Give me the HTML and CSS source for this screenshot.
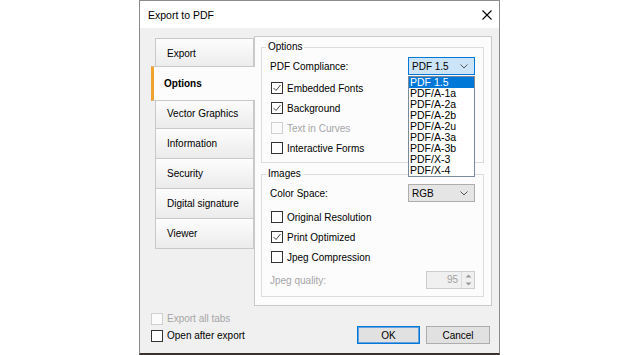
FILE: index.html
```html
<!DOCTYPE html>
<html lang="en">

<head>
    <meta charset="UTF-8">
    <title>Export to PDF</title>
    <link rel="stylesheet" href="styles.css">
</head>

<body>
    <div class="dialog">
        <div class="titlebar">
            <span class="title">Export to PDF</span>
            <svg class="close" width="10" height="10" viewBox="0 0 10 10">
                <path d="M0.5 0.5 L9.5 9.5 M9.5 0.5 L0.5 9.5" stroke="#000" stroke-width="1.1" fill="none" />
            </svg>
        </div>

        <div class="content">
            <div class="main">
                <ul class="tabs">
                    <li class="tab">Export</li>
                    <li class="tab active">Options</li>
                    <li class="tab">Vector Graphics</li>
                    <li class="tab">Information</li>
                    <li class="tab">Security</li>
                    <li class="tab">Digital signature</li>
                    <li class="tab">Viewer</li>
                </ul>

                <div class="page">
                    <fieldset class="group group-options">
                        <legend>Options</legend>
                        <div class="field">
                            <span>PDF Compliance:</span>
                            <div class="select open">
                                <span>PDF 1.5</span>
                                <svg width="8" height="5" viewBox="0 0 8 5">
                                    <path d="M0.5 0.5 L4 4 L7.5 0.5" stroke="#555" fill="none" />
                                </svg>
                                <ul class="select-list">
                                    <li class="hl">PDF 1.5</li>
                                    <li>PDF/A-1a</li>
                                    <li>PDF/A-2a</li>
                                    <li>PDF/A-2b</li>
                                    <li>PDF/A-2u</li>
                                    <li>PDF/A-3a</li>
                                    <li>PDF/A-3b</li>
                                    <li>PDF/X-3</li>
                                    <li>PDF/X-4</li>
                                </ul>
                            </div>
                        </div>
                        <div class="checks">
                            <div class="check"><span class="box checked"><svg width="10" height="10" viewBox="0 0 10 10"><path d="M1.5 5 L4 7.5 L8.5 2" stroke="#333" stroke-width="0.9" fill="none" /></svg></span>Embedded Fonts</div>
                            <div class="check"><span class="box checked"><svg width="10" height="10" viewBox="0 0 10 10"><path d="M1.5 5 L4 7.5 L8.5 2" stroke="#333" stroke-width="0.9" fill="none" /></svg></span>Background</div>
                            <div class="check disabled"><span class="box"></span>Text in Curves</div>
                            <div class="check"><span class="box"></span>Interactive Forms</div>
                        </div>
                    </fieldset>

                    <fieldset class="group group-images">
                        <legend>Images</legend>
                        <div class="field">
                            <span>Color Space:</span>
                            <div class="select">
                                <span>RGB</span>
                                <svg width="8" height="5" viewBox="0 0 8 5">
                                    <path d="M0.5 0.5 L4 4 L7.5 0.5" stroke="#555" fill="none" />
                                </svg>
                            </div>
                        </div>
                        <div class="checks">
                            <div class="check"><span class="box"></span>Original Resolution</div>
                            <div class="check"><span class="box checked"><svg width="10" height="10" viewBox="0 0 10 10"><path d="M1.5 5 L4 7.5 L8.5 2" stroke="#333" stroke-width="0.9" fill="none" /></svg></span>Print Optimized</div>
                            <div class="check"><span class="box"></span>Jpeg Compression</div>
                        </div>
                        <div class="field field-quality">
                            <span class="muted">Jpeg quality:</span>
                            <div class="spin">
                                <span class="spin-value">95</span>
                                <span class="spin-arrows">
                                    <svg width="7" height="4" viewBox="0 0 7 4"><path d="M0.5 3.5 L3.5 0.5 L6.5 3.5 Z" fill="#9a9a9a" /></svg>
                                    <svg width="7" height="4" viewBox="0 0 7 4"><path d="M0.5 0.5 L3.5 3.5 L6.5 0.5 Z" fill="#9a9a9a" /></svg>
                                </span>
                            </div>
                        </div>
                    </fieldset>
                </div>
            </div>

            <div class="footer">
                <div class="footer-checks">
                    <div class="check disabled"><span class="box"></span>Export all tabs</div>
                    <div class="check"><span class="box"></span>Open after export</div>
                </div>
                <div class="buttons">
                    <button class="btn primary">OK</button>
                    <button class="btn">Cancel</button>
                </div>
            </div>
        </div>
    </div>
</body>

</html>
```

FILE: styles.css
```css
body {
    margin: 0;
    background-color: #fff;
    font-family: "Liberation Sans", Arial, sans-serif;
    font-size: 10px;
    color: #000;
}

.dialog {
    width: 361px;
    height: 355px;
    margin-left: 139px;
    box-sizing: border-box;
    border: 1px solid #8c8c8c;
    border-bottom: 2px solid #3b2f2f;
    background-color: #f0f0f0;
    display: flex;
    flex-direction: column;
}

.titlebar {
    height: 27px;
    flex-shrink: 0;
    background-color: #fff;
    display: flex;
    align-items: center;
    justify-content: space-between;
    padding: 0 7px 0 8px;
}

.title {
    font-size: 10.5px;
}

.content {
    flex: 1;
    padding: 8px 7px 0 11px;
    display: flex;
    flex-direction: column;
}

.main {
    display: flex;
    align-items: flex-start;
}

/* left tab strip */
.tabs {
    list-style: none;
    margin: 2px 0 0;
    padding: 0;
    width: 103px;
    flex-shrink: 0;
    display: flex;
    flex-direction: column;
}

.tab {
    height: 31px;
    box-sizing: border-box;
    margin: -1px 0 0 4px;
    padding-left: 11px;
    border: 1px solid #c9c9c9;
    background: linear-gradient(#fdfdfd, #ebebeb);
    display: flex;
    align-items: center;
}

.tab:first-child {
    margin-top: 0;
}

.tab.active {
    height: 35px;
    margin: -3px -1px -2px 0;
    padding-left: 10px;
    border-left: 3px solid #f0a32e;
    border-right: none;
    background: #fcfcfc;
    font-weight: bold;
    position: relative;
    z-index: 1;
}

/* tab page */
.page {
    width: 238px;
    flex-shrink: 0;
    box-sizing: border-box;
    border: 1px solid #c9c9c9;
    background-color: #fcfcfc;
    padding: 4px 7px 8px 6px;
}

.group {
    margin: 0;
    padding: 0 8px 4px 4px;
    border: 1px solid #dcdcdc;
}

.group legend {
    padding: 0 2px;
    line-height: 12px;
}

.group-images {
    margin-top: 5px;
    padding-bottom: 7px;
}

.field {
    height: 18px;
    margin: 4px 0 0 4px;
    display: flex;
    align-items: center;
    justify-content: space-between;
}

.group-images .field {
    margin-top: 4px;
}

.group-images .field-quality {
    margin-top: 4px;
}

.muted {
    color: #a6a6a6;
}

.select {
    width: 67px;
    height: 18px;
    box-sizing: border-box;
    border: 1px solid #adadad;
    background-color: #e5e5e5;
    padding: 0 6px 0 3px;
    display: flex;
    align-items: center;
    justify-content: space-between;
    position: relative;
}

.select.open {
    border-color: #0078d7;
    background-color: #cce4f7;
}

.select-list {
    position: absolute;
    top: calc(100% + 2px);
    left: -1px;
    width: 67px;
    box-sizing: border-box;
    margin: 0;
    padding: 0;
    list-style: none;
    border: 1px solid #7a8a9a;
    background-color: #fff;
    font-size: 10.5px;
    z-index: 2;
}

.select-list li {
    height: 11px;
    line-height: 11px;
    padding-left: 1px;
}

.select-list li.hl {
    background-color: #0078d7;
    color: #fff;
}

.checks {
    margin-top: 3px;
}

.group-images .checks {
    margin-top: 5px;
}

.check {
    height: 20px;
    margin-left: 5px;
    display: flex;
    align-items: center;
}

.box {
    width: 12px;
    height: 12px;
    box-sizing: border-box;
    border: 1px solid #333;
    background-color: #fff;
    margin-right: 4px;
    display: flex;
    align-items: center;
    justify-content: center;
}

.check.disabled {
    color: #a6a6a6;
}

.check.disabled .box {
    border-color: #cfcfcf;
    background-color: #fbfbfb;
}

.spin {
    width: 49px;
    height: 18px;
    box-sizing: border-box;
    border: 1px solid #cccccc;
    background-color: #f0f0f0;
    display: flex;
}

.spin-value {
    flex: 1;
    text-align: right;
    padding-right: 3px;
    line-height: 16px;
    color: #a0a0a0;
}

.spin-arrows {
    width: 12px;
    border-left: 1px solid #dadada;
    display: flex;
    flex-direction: column;
    align-items: center;
    justify-content: space-around;
}

/* bottom bar */
.footer {
    padding: 4px 2px 0 0;
    display: flex;
    justify-content: space-between;
    align-items: flex-end;
}

.footer .check {
    height: 17px;
    margin-left: 0;
}

.buttons {
    display: flex;
    gap: 6px;
}

.btn {
    width: 64px;
    height: 18px;
    box-sizing: border-box;
    border: 1px solid #adadad;
    background-color: #e1e1e1;
    font-family: inherit;
    font-size: 10px;
    color: #000;
    padding: 0;
}

.btn.primary {
    width: 63px;
    border-color: #0078d7;
    box-shadow: inset 0 0 0 1px #5ea0e0;
}
```
